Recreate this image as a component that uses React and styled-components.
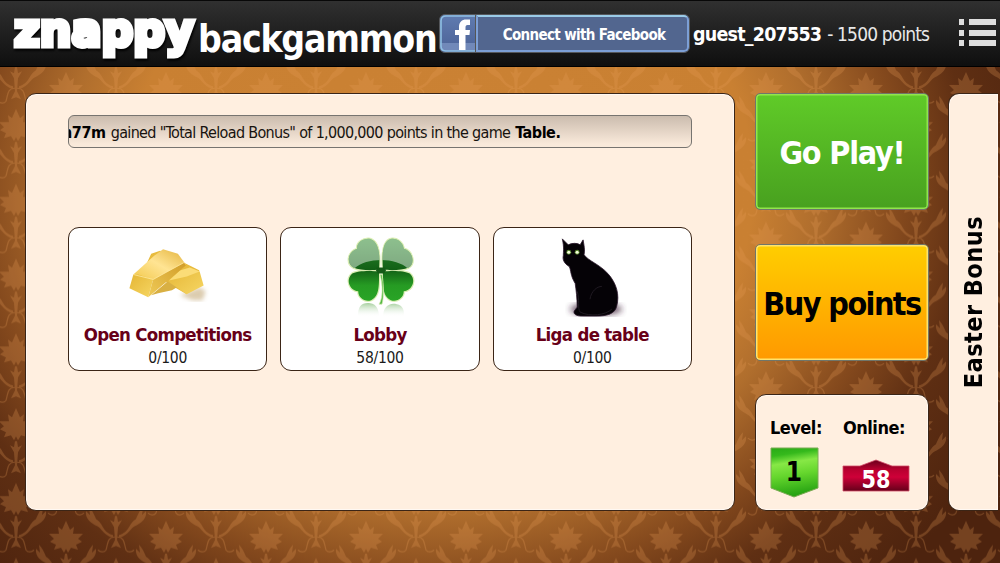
import React from 'react'
import styled, { createGlobalStyle } from 'styled-components'

const GlobalStyle = createGlobalStyle`
  * {
    box-sizing: border-box;
  }
  body {
    margin: 0;
    overflow: hidden;
    background: #50260f;
  }
`

const Page = styled.div`
  position: relative;
  width: 1000px;
  height: 563px;
  overflow: hidden;
  font-family: "DejaVu Sans Condensed", "DejaVu Sans", sans-serif;
  font-stretch: condensed;
  color: #000;
  background: radial-gradient(ellipse 490px 425px at 440px 185px, #cb8234 0%, #c98032 64%, #b06e2d 77%, #84491d 94%, #5f2f13 108%, #4d230e 130%);
`

const Wallpaper = styled.svg`
  position: absolute;
  inset: 0;
  width: 100%;
  height: 100%;
`

const Header = styled.header`
  position: relative;
  display: flex;
  align-items: flex-start;
  height: 67px;
  padding-left: 9px;
  border-top: 1px solid #080808;
  border-bottom: 1px solid #000;
  background: linear-gradient(#303030, #0f0f0f);
`

const Logo = styled.svg`
  flex: none;
  width: 189px;
  height: 65px;
  overflow: visible;
`

const Label = styled.span`
  display: block;
  white-space: nowrap;
  font-size: ${({ $size }) => $size}px;
  line-height: ${({ $line }) => $line}px;
  font-weight: ${({ $bold }) => ($bold ? 700 : 400)};
  letter-spacing: ${({ $track }) => $track || 0}px;
  color: ${({ $color }) => $color || 'inherit'};
`

const GameName = styled.div`
  flex: none;
  width: 241px;
  padding-top: 16px;
`

const FacebookButton = styled.button`
  display: flex;
  flex: none;
  width: 251px;
  height: 39px;
  margin-top: 13px;
  padding: 0;
  border: 1px solid #55575b;
  border-radius: 6px;
  background: #52668f;
  overflow: hidden;
  font-family: inherit;
  font-stretch: inherit;
`

const FacebookMark = styled.svg`
  flex: none;
  width: 36px;
  height: 37px;
`

const FacebookText = styled.div`
  display: flex;
  flex: 1;
  align-items: center;
  justify-content: center;
  height: 37px;
  padding: 2px 0 0 3px;
  border: 2px solid #7c9fd6;
  border-top-color: #9acbe8;
  border-radius: 0 5px 5px 0;
`

const Account = styled.div`
  display: flex;
  flex: none;
  width: 269px;
  padding: 20px 0 0 3px;
  gap: 6px;
`

const MenuIcon = styled.svg`
  width: 38px;
  height: 28px;
  margin-top: 18px;
`

const Content = styled.main`
  position: relative;
  display: flex;
  height: 418px;
  margin: 26px 2px 0 25px;
`

const Panel = styled.section`
  border: 1px solid #3b2516;
  border-radius: 11px;
  background: #ffefe0;
  box-shadow: inset 0 0 0 1px #fff8f2;
`

const MainPanel = styled(Panel)`
  width: 710px;
  padding: 21px 42px;
`

const Ticker = styled.div`
  display: flex;
  gap: 5px;
  height: 33px;
  border: 1px solid #777470;
  border-radius: 6px;
  overflow: hidden;
  background: linear-gradient(#cbbcae, #f9e9da 90%);
`

const TickerStart = styled.div`
  margin-left: -7px;
`

const Rooms = styled.div`
  display: flex;
  gap: 13px;
  margin-top: 79px;
`

const RoomCard = styled.article`
  display: flex;
  flex: 1;
  flex-direction: column;
  align-items: center;
  height: 144px;
  border: 1px solid #3b2516;
  border-radius: 11px;
  background: #fff;
`

const RoomIcon = styled.svg`
  width: 100px;
  height: 95px;
`

const Actions = styled.aside`
  display: flex;
  flex-direction: column;
  justify-content: space-between;
  width: 174px;
  margin-left: 20px;
`

const ActionButton = styled.button`
  display: flex;
  align-items: center;
  justify-content: center;
  height: 117px;
  padding: 3px 0 0;
  border: 1px solid #70766a;
  border-radius: 5px;
  font-family: inherit;
  font-stretch: inherit;
  color: ${({ $play }) => ($play ? '#fff' : '#000')};
  background: ${({ $play }) =>
    $play ? 'linear-gradient(#60cb28, #48a01f)' : 'linear-gradient(#ffce00, #ff9900)'};
  box-shadow: inset 0 0 0 1.5px ${({ $play }) => ($play ? '#91e64b' : '#ffe36b')};
`

const Stats = styled(Panel)`
  display: flex;
  height: 117px;
  padding: 21px 0 0 14px;
`

const Stat = styled.div`
  width: ${({ $width }) => $width}px;
`

const Badge = styled.svg`
  display: block;
  width: 70px;
  height: 54px;
  margin: 5px 0 0 -1px;
`

const BonusTab = styled(Panel)`
  display: flex;
  align-items: center;
  justify-content: center;
  width: 50px;
  margin-left: 19px;
  border-right: 0;
  border-radius: 11px 0 0 11px;
`

const Sideways = styled.div`
  writing-mode: vertical-rl;
  transform: rotate(180deg);
`

// One ornament: a leaf with its stalk and the scrolls curling round it.
const Ornament = ({ x, y }) => (
  <g transform={`translate(${x} ${y})`}>
    <path d="M0 0 4 9 8 6 7 13 17 13 12 18 16 21 10 24 12 29 5 27 2 32 0 28-2 32-5 27-12 29-10 24-16 21-12 18-17 13-7 13-8 6-4 9Z" />
    <path d="M-1 33h2l1 6 4-2-4 7-1 13 4 8-5-2-5 2 4-8-1-13-4-7 4 2Z" />
    <path d="M3 52C14 49 12 41 20 36c2-5 4-9 7-12l-1 8 4-4c1 8-5 12-11 15C14 45 14 51 3 55ZM-3 52C-14 49-12 41-20 36c-2-5-4-9-7-12l1 8-4-4c-1 8 5 12 11 15 5 2 5 8 16 12Z" />
    <path d="M1 54c8 0 7 7 9 13 2 3 6 2 8 0M-1 54c-8 0-7 7-9 13-2 3-6 2-8 0" fill="none" stroke="#eba05a" strokeWidth="1.2" />
  </g>
)

const Damask = () => (
  <Wallpaper>
    <defs>
      <pattern id="damask" x="16" y="68" width="100" height="74.8" patternUnits="userSpaceOnUse">
        <g fill="#e69a55">
          <Ornament x={50} y={4} />
          <Ornament x={50} y={-70.8} />
          <Ornament x={0} y={41} />
          <Ornament x={100} y={41} />
          <Ornament x={0} y={-33.8} />
          <Ornament x={100} y={-33.8} />
        </g>
      </pattern>
    </defs>
    <rect width="1000" height="563" fill="url(#damask)" opacity=".26" />
  </Wallpaper>
)

const GoldIcon = () => (
  <RoomIcon viewBox="118 228 100 95">
    <defs>
      <linearGradient id="goldTop" x1="0" y1="1" x2="1" y2="0">
        <stop offset="0" stopColor="#f2c84b" />
        <stop offset=".5" stopColor="#ffe493" />
        <stop offset="1" stopColor="#e3b23a" />
      </linearGradient>
      <linearGradient id="goldFront" x1="0" y1="0" x2="1" y2="1">
        <stop offset="0" stopColor="#e5b635" />
        <stop offset="1" stopColor="#f6d663" />
      </linearGradient>
      <linearGradient id="goldSide" x1="0" y1="1" x2="1" y2="0">
        <stop offset="0" stopColor="#f0cb58" />
        <stop offset="1" stopColor="#d19d29" />
      </linearGradient>
      <filter id="goldBlur"><feGaussianBlur stdDeviation="2" /></filter>
    </defs>
    <path d="M180 296 200 288 206 292 203 301 193 301Z" fill="#b99a61" opacity=".5" filter="url(#goldBlur)" />
    <path d="M146 265 151 254 160 251 200 271 187 277 187 295 168 284Z" fill="#e8bb3d" />
    <path d="M151 296 170 280 177 288 172 291 158 294Z" fill="#d9b043" />
    <path d="M168 282 180 271 190 268 200 272 204 286 187 295Z" fill="url(#goldFront)" />
    <path d="M169 281 180 271 190 268 200 272 187 277Z" fill="#fbdc77" />
    <path d="M133 275 154 256 163 249.500 178 254 186 265 153 281Z" fill="url(#goldTop)" />
    <path d="M133 275 138 275 153 280 148 298 129 289Z" fill="url(#goldFront)" />
    <path d="M153 280 184 263 186 266 148 298Z" fill="url(#goldSide)" />
    <path d="M133 275 153 280 184 263" fill="none" stroke="#ffeaa0" strokeWidth=".8" />
  </RoomIcon>
)

const CloverLeaves = () => (
  <>
    <path d="M379 270C372 271 360 271 353 268 346 264 347 252 357 249 356 243 363 238 370 239 380 242 380 258 379 270Z" />
    <path d="M383 270C390 271 402 271 409 268 416 264 413 251 404 249 403 242 397 238 391 239 382 241 382 257 383 270Z" />
    <path d="M379 272C371 271 357 271 352 274 345 280 349 291 358 292 358 299 365 303 371 301 380 297 379 284 379 272Z" />
    <path d="M383 272C391 271 405 271 410 274 417 280 413 291 404 292 404 299 397 303 391 301 382 297 383 284 383 272Z" />
  </>
)

const CloverIcon = () => (
  <RoomIcon viewBox="330 228 100 95">
    <defs>
      <linearGradient id="clover" gradientUnits="userSpaceOnUse" x1="0" y1="238" x2="0" y2="302">
        <stop offset="0" stopColor="#2e8b2f" />
        <stop offset=".5" stopColor="#126016" />
        <stop offset=".75" stopColor="#269b23" />
        <stop offset="1" stopColor="#29a526" />
      </linearGradient>
      <linearGradient id="reflection" gradientUnits="userSpaceOnUse" x1="0" y1="303" x2="0" y2="318">
        <stop offset="0" stopColor="#67ad58" stopOpacity=".65" />
        <stop offset="1" stopColor="#fff" stopOpacity="0" />
      </linearGradient>
      <clipPath id="cloverClip"><CloverLeaves /></clipPath>
      <filter id="soft"><feGaussianBlur stdDeviation=".8" /></filter>
    </defs>
    <path d="M358 318C357 307 362 303 370 304 377 305 379 311 379 318ZM383 318C383 308 389 303 397 305 403 306 405 311 404 318Z" fill="url(#reflection)" />
    <g stroke="#d9edb3" strokeWidth="2.4" fill="#d9edb3" filter="url(#soft)"><CloverLeaves /></g>
    <g fill="url(#clover)"><CloverLeaves /></g>
    <path d="M377 268h8l1 3-2 3h-6l-2-3Z" fill="#145a16" />
    <path d="M345 236h72v33h-9C397 258 367 257 354 269h-9Z" fill="#fff" opacity=".46" clipPath="url(#cloverClip)" />
    <path d="M380 275C383 286 383 299 379 305l3 0C384 300 384 285 382 275Z" fill="#51b742" stroke="#d9edb3" strokeWidth=".7" />
  </RoomIcon>
)

const CatIcon = () => (
  <RoomIcon viewBox="542 228 100 95">
    <defs>
      <filter id="catBlur"><feGaussianBlur stdDeviation="3" /></filter>
    </defs>
    <ellipse cx="596" cy="310" rx="26" ry="6" fill="#3b1c35" opacity=".8" filter="url(#catBlur)" />
    <path d="M562 239 568 245C572 243 577 243 580 245L583 240C584 246 585 250 584 255 588 261 600 265 608 274 617 284 620 296 617 307 615 315 607 317 596 317H582C576 317 573 315 574 312L577 308C577 299 576 291 575 284 570 276 571 271 569 267 564 264 562 260 563 256 563 252 564 248 562 239Z" fill="#050206" stroke="#2b182c" strokeWidth=".8" />
    <path d="M577 292C580 301 577 309 580 313 590 318 606 316 612 310M590 300C591 292 597 287 602 287" fill="none" stroke="#1f1921" strokeWidth="1" />
    <circle cx="568.5" cy="252.5" r="2.5" fill="#507a28" />
    <circle cx="577" cy="252.5" r="2.5" fill="#507a28" />
    <circle cx="568.5" cy="252.5" r="1.6" fill="#f4ffda" />
    <circle cx="577" cy="252.5" r="1.6" fill="#f4ffda" />
  </RoomIcon>
)

const rooms = [
  { name: 'Open Competitions', count: '0/100', Icon: GoldIcon },
  { name: 'Lobby', count: '58/100', Icon: CloverIcon },
  { name: 'Liga de table', count: '0/100', Icon: CatIcon },
]

const TopBar = () => (
  <Header>
    <Logo viewBox="9 1 189 65">
      <text x="14" y="45.5" fontFamily="DejaVu Sans" fontWeight="700" fontSize="46" textLength="180" lengthAdjust="spacingAndGlyphs" fill="#fff" stroke="#fff" strokeWidth="5" style={{ fontStretch: 'normal', filter: 'drop-shadow(1px 2px 1px #000)' }}>znappy</text>
    </Logo>
    <GameName>
      <Label $size={37} $line={46} $bold $track={-1.2} $color="#fff">backgammon</Label>
    </GameName>
    <FacebookButton>
      <FacebookMark viewBox="0 0 36 37">
        <defs>
          <linearGradient id="fb" x1="0" y1="0" x2="0" y2="1">
            <stop offset="0" stopColor="#607bb0" />
            <stop offset="1" stopColor="#4b6296" />
          </linearGradient>
        </defs>
        <rect width="36" height="37" fill="url(#fb)" />
        <rect y="28" width="36" height="8" fill="#7189b9" />
        <path d="M36 1H6Q1 1 1 6V31Q1 36 6 36H36" fill="none" stroke="#8fc0e3" strokeWidth="1.6" />
        <path d="M19 35V20H15V15H19V12C19 7 22 4.500 26 4.500H30V10H27.500C26 10 25.500 11 25.500 12.500V15H30L29.500 20H25.500V35Z" fill="#fff" />
        <path d="M35.500 0V37" stroke="#555" strokeWidth="1" />
      </FacebookMark>
      <FacebookText>
        <Label $size={15} $line={20} $bold $track={-0.65} $color="#fff">Connect with Facebook</Label>
      </FacebookText>
    </FacebookButton>
    <Account>
      <Label $size={19.5} $line={27} $bold $track={-0.8} $color="#fff">guest_207553</Label>
      <Label $size={19} $line={27} $track={-0.85} $color="#e8e8e8">- 1500 points</Label>
    </Account>
    <MenuIcon viewBox="0 0 38 28" fill="#dedede">
      <path d="M0 0h5v6H0zM10 0h27v6H10zM0 11h5v6H0zM10 11h27v6H10zM0 21h5v6H0zM10 21h27v6H10z" />
    </MenuIcon>
  </Header>
)

const App = () => {
  return (
    <Page>
      <GlobalStyle />
      <Damask />
      <TopBar />
      <Content>
        <MainPanel>
          <Ticker>
            <TickerStart>
              <Label $size={16} $line={33} $bold $track={-0.4}>n77m</Label>
            </TickerStart>
            <Label $size={16} $line={33} $track={-0.67} $color="#17130f">gained "Total Reload Bonus" of 1,000,000 points in the game</Label>
            <Label $size={16} $line={33} $bold $track={-0.45}>Table.</Label>
          </Ticker>
          <Rooms>
            {rooms.map(({ name, count, Icon }) => (
              <RoomCard key={name}>
                <Icon />
                <Label $size={18.5} $line={25} $bold $track={-0.7} $color="#680018">{name}</Label>
                <Label $size={15.5} $line={23} $track={-0.3} $color="#1a1a1a">{count}</Label>
              </RoomCard>
            ))}
          </Rooms>
        </MainPanel>
        <Actions>
          <ActionButton $play>
            <Label $size={32} $line={40} $bold $track={-1.2}>Go Play!</Label>
          </ActionButton>
          <ActionButton>
            <Label $size={32} $line={42} $bold $track={-1.55}>Buy points</Label>
          </ActionButton>
          <Stats>
            <Stat $width={73}>
              <Label $size={18} $line={24} $bold $track={-0.5}>Level:</Label>
              <Badge viewBox="769 445 70 54">
                <defs>
                  <linearGradient id="level" x1="0" y1="0" x2=".15" y2="1">
                    <stop offset="0" stopColor="#28aa16" />
                    <stop offset=".17" stopColor="#35b91c" />
                    <stop offset=".35" stopColor="#87e846" />
                    <stop offset=".6" stopColor="#65d62d" />
                    <stop offset="1" stopColor="#28a413" />
                  </linearGradient>
                </defs>
                <path d="M771 448H818V488L794 497 771 488Z" fill="url(#level)" stroke="#7baa54" />
                <text x="794" y="481" textAnchor="middle" fontSize="26" fontWeight="700">1</text>
              </Badge>
            </Stat>
            <Stat $width={80}>
              <Label $size={18} $line={24} $bold $track={-0.5}>Online:</Label>
              <Badge viewBox="842 445 70 54">
                <defs>
                  <linearGradient id="online" x1="0" y1="0" x2="0" y2="1">
                    <stop offset="0" stopColor="#69001b" />
                    <stop offset=".3" stopColor="#b7002f" />
                    <stop offset=".55" stopColor="#ce0038" />
                    <stop offset="1" stopColor="#65001a" />
                  </linearGradient>
                </defs>
                <path d="M843 466H860L876 460 892 466H909V491H843Z" fill="url(#online)" stroke="#d34b68" strokeWidth=".8" />
                <text x="876" y="488" textAnchor="middle" fontSize="24.5" fontWeight="700" fill="#fff" textLength="29" lengthAdjust="spacingAndGlyphs">58</text>
              </Badge>
            </Stat>
          </Stats>
        </Actions>
        <BonusTab>
          <Sideways>
            <Label $size={25} $line={30} $bold $track={0.45}>Easter Bonus</Label>
          </Sideways>
        </BonusTab>
      </Content>
    </Page>
  )
}

export default App
